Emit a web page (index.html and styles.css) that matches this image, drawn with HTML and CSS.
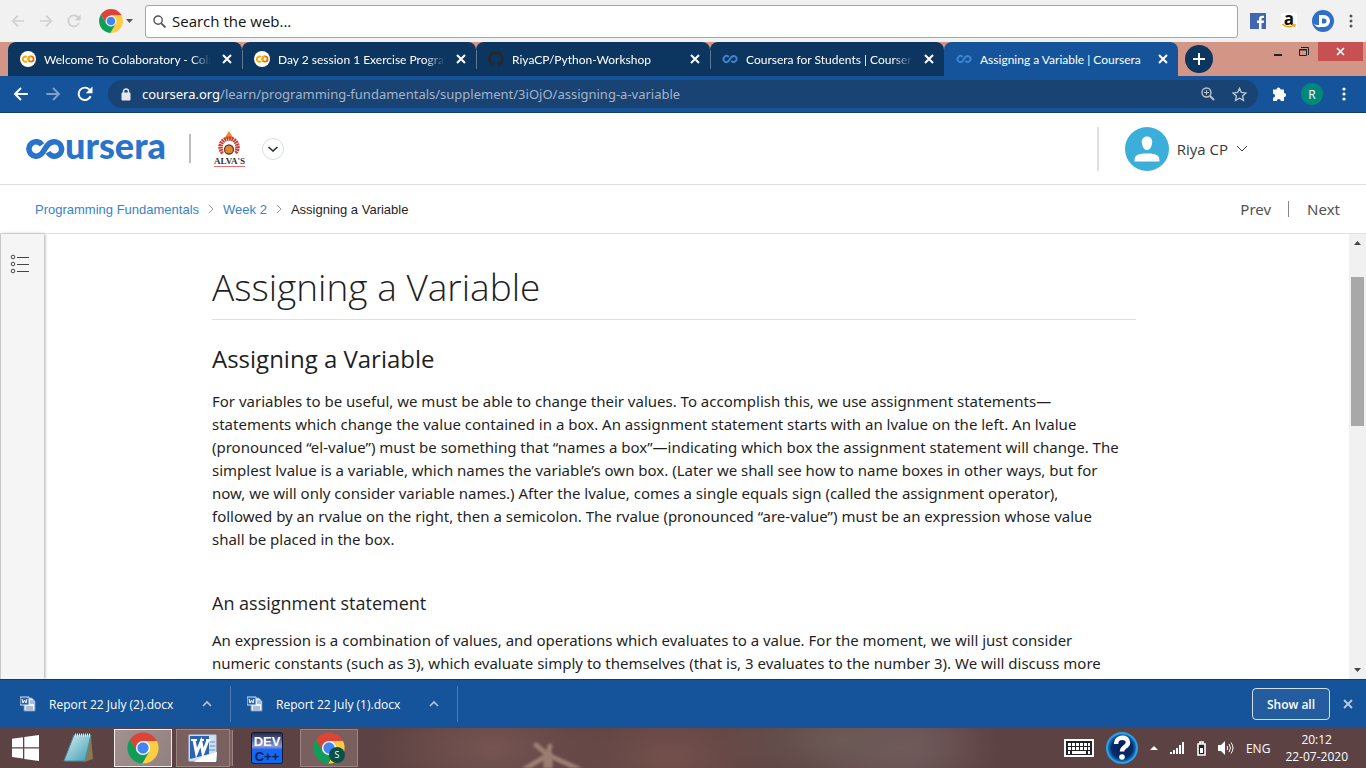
FILE: index.html
```html
<!DOCTYPE html>
<html lang="en">
<head>
<meta charset="utf-8">
<title>Assigning a Variable | Coursera</title>
<link rel="stylesheet" href="styles.css">
</head>
<body>
<svg class="defs" width="0" height="0" aria-hidden="true">
  <defs><clipPath id="disc"><circle cx="24" cy="24" r="22"/></clipPath>
  <linearGradient id="pad" x1="0" y1="0" x2="1" y2="1"><stop offset="0" stop-color="#d6f0f4"/><stop offset="1" stop-color="#3c9cb2"/></linearGradient>
  <linearGradient id="dev" x1="0" y1="0" x2="0" y2="1"><stop offset="0" stop-color="#20264a"/><stop offset=".45" stop-color="#8c98d8"/><stop offset=".55" stop-color="#1a66f0"/><stop offset="1" stop-color="#0a6af0"/></linearGradient>
  <radialGradient id="help"><stop offset="0" stop-color="#061e55"/><stop offset=".7" stop-color="#082a6c"/><stop offset="1" stop-color="#1690dc"/></radialGradient></defs>
  <symbol id="chrome" viewBox="0 0 48 48"><g clip-path="url(#disc)"><path fill="#db4437" d="M24 24 15.3 29 3.3 8.2 0 0h48v14H24z"/><path fill="#ffcd40" d="M24 24V14h24v34l-27.3 1.8L32.7 29z"/><path fill="#0f9d58" d="M24 24l8.7 5-12 20.8L0 48V5l3.3 3.2 12 20.8z"/></g><circle cx="24" cy="24" r="10" fill="#fff"/><circle cx="24" cy="24" r="8" fill="#4285f4"/></symbol>
  <symbol id="back" viewBox="0 0 24 24"><path d="M21 12H4M12 4l-8 8 8 8" fill="none" stroke="currentColor" stroke-width="2.6"/></symbol>
  <symbol id="forward" viewBox="0 0 24 24"><path d="M3 12h17M12 4l8 8-8 8" fill="none" stroke="currentColor" stroke-width="2.6"/></symbol>
  <symbol id="reload" viewBox="0 0 24 24"><path d="M19.5 15A8.3 8.3 0 1 1 18 6.2L20 8.4" fill="none" stroke="currentColor" stroke-width="2.6"/><path d="M22 2v9h-9z" fill="currentColor"/></symbol>
  <symbol id="close" viewBox="0 0 16 16"><path d="M4 4l8 8M12 4l-8 8" fill="none" stroke="currentColor" stroke-width="2"/></symbol>
  <symbol id="colab" viewBox="0 0 16 16"><circle cx="8" cy="8" r="8" fill="#fff"/><g fill="none" stroke-width="1.9"><path stroke="#f9ab00" d="M7 6A2.6 2.6 0 1 0 7 10.2"/><circle stroke="#e8710a" cx="11" cy="8" r="2.6"/><path stroke="#f9ab00" d="M9.3 10A2.6 2.6 0 0 1 11 5.4"/></g></symbol>
  <symbol id="github" viewBox="0 0 16 16"><path fill="#24292e" d="M8 0C3.6 0 0 3.6 0 8c0 3.5 2.3 6.500 5.500 7.600.4.1.5-.2.5-.4v-1.400c-2.200.5-2.700-1-2.700-1-.4-.9-.9-1.200-.9-1.200-.7-.5.1-.5.1-.5.8.1 1.200.8 1.200.8.7 1.200 1.900.9 2.300.7.1-.5.3-.9.5-1.100-1.800-.2-3.600-.9-3.600-4 0-.9.3-1.600.8-2.100-.1-.2-.4-1 .1-2.100 0 0 .7-.2 2.200.8a7.600 7.600 0 0 1 4 0c1.500-1 2.200-.8 2.200-.8.4 1.100.2 1.900.1 2.100.5.6.8 1.300.8 2.100 0 3.100-1.900 3.700-3.700 3.900.3.3.6.8.6 1.500v2.200c0 .2.1.5.6.4A8 8 0 0 0 8 0z"/></symbol>
  <symbol id="loop" viewBox="0 0 16 16"><path d="M6.700 6A3 3 0 1 0 6 10.600C8 9.500 8.200 5 11.600 5a3 3 0 1 1-2.200 5" fill="none" stroke="#3d85d0" stroke-width="1.900"/></symbol>
  <symbol id="up" viewBox="0 0 12 12"><path d="M2 8l4-4 4 4" fill="none" stroke="currentColor" stroke-width="1.600"/></symbol>
  <symbol id="down" viewBox="0 0 12 12"><path d="M1 3l5 5 5-5" fill="none" stroke="currentColor" stroke-width="1"/></symbol>
  <symbol id="right" viewBox="0 0 8 12"><path d="M2 2l4 4-4 4" fill="none" stroke="currentColor" stroke-width="1"/></symbol>
  <symbol id="doc" viewBox="0 0 16 16"><path d="M4 2h8l3 3v10H4z" fill="#eef4fb" stroke="#6f8cb5"/><path d="M10 5h4M10 7h4M6 11h7M6 13h7" stroke="#5d87c4"/><path d="M0 1h9v8H0z" fill="#2d5ca8" stroke="#d4e2f4"/><path d="M2 3l1 4 1.500-3L6 7l1-4" fill="none" stroke="#fff"/></symbol>
</svg>
<div class="screen">
  <div class="launcher">
    <button class="ghost" aria-label="Back"><svg class="i16"><use href="#back"/></svg></button>
    <button class="ghost" aria-label="Forward"><svg class="i16"><use href="#forward"/></svg></button>
    <button class="ghost" aria-label="Reload"><svg class="i16"><use href="#reload"/></svg></button>
    <button class="engine" aria-label="Choose browser"><svg class="i26"><use href="#chrome"/></svg><svg width="7" height="4"><path d="M0 0h7L3.500 4z" fill="#555"/></svg></button>
    <label class="search"><svg width="13" height="13" viewBox="0 0 14 14" fill="none" stroke="#555" aria-hidden="true"><circle cx="5.500" cy="5.500" r="4.500" stroke-width="1.500"/><path d="M9 9l4.500 4.500" stroke-width="2"/></svg><input type="text" aria-label="Search the web" placeholder="Search the web..."></label>
    <div class="tiles">
      <a href="#" aria-label="Facebook"><svg class="i16" viewBox="0 0 16 16"><path fill="#4267b2" d="M0 0h16v16H0z"/><path fill="#fff" d="M9 16v-6H7V7.500h2V6c0-2.300 1.300-3.300 3.200-3.300H14V5h-1.200C11.800 5 11.500 5.300 11.500 6.300v1.200H14l-.3 2.500h-2.200v6z"/></svg></a>
      <a class="amazon" href="#" aria-label="Amazon"><span>a</span><svg width="14" height="4" viewBox="0 0 14 4"><path d="M0 0q6 5 12 1M10 1h3l-1 2" fill="none" stroke="#f90" stroke-width="1.300"/></svg></a>
      <a href="#" aria-label="Dictionary"><svg width="22" height="22" viewBox="0 0 22 22"><circle cx="11" cy="11" r="11" fill="#2f6fca"/><path d="M2 13.500q2 2 4 1.500h1V5h5a6 6 0 0 1 0 12H8q-4 1-6-3.500z" fill="#fff"/><path d="M10 8.500h2a2.500 2.500 0 0 1 0 5h-2z" fill="#2f6fca"/></svg></a>
      <button class="dots" aria-label="Menu"><svg width="4" height="14"><g fill="currentColor"><circle cx="2" cy="2" r="1.500"/><circle cx="2" cy="7" r="1.500"/><circle cx="2" cy="12" r="1.500"/></g></svg></button>
    </div>
  </div>

  <div class="tabs">
    <div class="tab"><svg class="i16"><use href="#colab"/></svg><span class="title">Welcome To Colaboratory - Colab</span><button aria-label="Close tab"><svg class="i16"><use href="#close"/></svg></button></div>
    <div class="tab"><svg class="i16"><use href="#colab"/></svg><span class="title">Day 2 session 1 Exercise Programs</span><button aria-label="Close tab"><svg class="i16"><use href="#close"/></svg></button></div>
    <div class="tab"><svg class="i16"><use href="#github"/></svg><span class="title">RiyaCP/Python-Workshop</span><button aria-label="Close tab"><svg class="i16"><use href="#close"/></svg></button></div>
    <div class="tab"><svg class="i16"><use href="#loop"/></svg><span class="title">Coursera for Students | Coursera</span><button aria-label="Close tab"><svg class="i16"><use href="#close"/></svg></button></div>
    <div class="tab active"><svg class="i16"><use href="#loop"/></svg><span class="title">Assigning a Variable | Coursera</span><button aria-label="Close tab"><svg class="i16"><use href="#close"/></svg></button></div>
    <button class="newtab" aria-label="New tab"><svg width="12" height="12"><path d="M6 0v12M0 6h12" stroke="#fff" stroke-width="2"/></svg></button>
    <div class="window">
      <button aria-label="Minimize"><svg width="10" height="10"><path d="M1 8h8" stroke="#222" stroke-width="2"/></svg></button>
      <button aria-label="Restore"><svg width="10" height="10" fill="none" stroke="#222"><path d="M2 0.500h7.500V8"/><path d="M.5 2.500h7v6h-7z"/><path d="M0 3h8"/></svg></button>
      <button class="quit" aria-label="Close"><svg width="10" height="10"><path d="M1 1l7 7M8 1L1 8" stroke="#fff" stroke-width="1.600"/></svg></button>
    </div>
  </div>

  <div class="address">
    <button aria-label="Back"><svg class="i18"><use href="#back"/></svg></button>
    <button class="off" aria-label="Forward"><svg class="i18"><use href="#forward"/></svg></button>
    <button aria-label="Reload"><svg class="i18"><use href="#reload"/></svg></button>
    <div class="omnibox">
      <svg width="10" height="13" viewBox="0 0 10 13"><path d="M1 5h8v7H1z" fill="#e4e7ea" stroke="#e4e7ea"/><path d="M2.500 5V3.500a2.500 2.500 0 0 1 5 0V5" fill="none" stroke="#e4e7ea" stroke-width="1.500"/></svg>
      <span class="url"><b>coursera.org</b>/learn/programming-fundamentals/supplement/3iOjO/assigning-a-variable</span>
      <button aria-label="Zoom"><svg width="14" height="14" viewBox="0 0 14 14" fill="none" stroke="#b8c4d2"><circle cx="5.500" cy="5.500" r="4.500" stroke-width="1.400"/><path d="M9 9l4 4" stroke-width="2"/><path d="M3 5.500h5M5.500 3v5"/></svg></button>
      <button aria-label="Bookmark"><svg width="15" height="15" viewBox="0 0 16 16"><path d="M8 1.500l2 4.300 4.800.6-3.500 3.200.9 4.700L8 12l-4.200 2.300.9-4.700L1.200 6.400 6 5.800z" fill="none" stroke="#b8c4d2" stroke-width="1.500"/></svg></button>
    </div>
    <button class="ext" aria-label="Extensions"><svg width="16" height="16" viewBox="0 0 16 16"><path fill="#fff" d="M1 3.500h3.500a2 2 0 1 1 4 0H12V7a2 2 0 1 1 0 4.200V15H8.800a2 2 0 1 0-4 0H1v-3.200a2 2 0 1 0 0-4z"/></svg></button>
    <button class="profile" aria-label="Profile">R</button>
    <button class="dots" aria-label="Menu"><svg width="4" height="14"><g fill="#fff"><circle cx="2" cy="2" r="1.600"/><circle cx="2" cy="7" r="1.600"/><circle cx="2" cy="12" r="1.600"/></g></svg></button>
  </div>

  <header class="site">
    <a class="logo" href="#" aria-label="coursera"><svg width="39" height="20" viewBox="0 0 39 20"><path d="M16 5.800A7.200 7.200 0 1 0 15 15.300C19 12 20.500 2.800 28.500 2.800a7.200 7.200 0 1 1-6.500 10.500" fill="none" stroke="#2a73cc" stroke-width="5.600"/></svg><span>ursera</span></a>
    <span class="rule"></span>
    <a class="partner" href="#"><svg width="22" height="26" viewBox="0 0 22 26"><path d="M11 0l5 8H6z" fill="#f28a2d"/><path d="M5 22a8.500 8.500 0 1 1 12 0" fill="none" stroke="#c8403c" stroke-width="4.500" stroke-dasharray="1.900 .6"/><circle cx="11" cy="18.500" r="6" fill="#fff"/><circle cx="11" cy="18.500" r="4.500" fill="#e8862f" stroke="#59453c" stroke-width="1.300"/></svg><span>ALVA'S</span></a>
    <button class="switch" aria-label="Switch program"><svg width="12" height="12" viewBox="0 0 12 12"><path d="M1.500 4L6 8l4.500-4" fill="none" stroke="#1f2b3a" stroke-width="1.600"/></svg></button>
    <button class="account"><svg width="44" height="44" viewBox="0 0 44 44"><circle cx="22" cy="22" r="22" fill="#3bafda"/><path fill="#fff" d="M22 9.500c3.500 0 5.500 2.500 5.200 6-.3 4-2.400 7.500-5.200 7.500s-4.900-3.500-5.200-7.500c-.3-3.500 1.700-6 5.200-6zM9.500 34.500c0-6 2-8 12.500-8s12.500 2 12.500 8z"/></svg><span>Riya CP</span><svg class="i12"><use href="#down"/></svg></button>
  </header>

  <nav class="crumbs" aria-label="Breadcrumb">
    <a href="#">Programming Fundamentals</a><svg width="8" height="12"><use href="#right"/></svg><a href="#">Week 2</a><svg width="8" height="12"><use href="#right"/></svg><span>Assigning a Variable</span>
    <div class="pager"><a href="#">Prev</a><a href="#">Next</a></div>
  </nav>

  <div class="content">
    <aside><button aria-label="Course outline"><svg width="20" height="20" fill="none" stroke="#444"><circle cx="3" cy="3" r="1.800"/><circle cx="3" cy="10" r="1.800"/><circle cx="3" cy="17" r="1.800"/><path d="M7 3.500h12M7 10.500h12M7 17.500h12"/></svg></button></aside>
    <main><article>
      <h1>Assigning a Variable</h1>
      <h2>Assigning a Variable</h2>
      <p>For variables to be useful, we must be able to change their values. To accomplish this, we use assignment statements—<br>statements which change the value contained in a box. An assignment statement starts with an lvalue on the left. An lvalue<br>(pronounced “el-value”) must be something that “names a box”—indicating which box the assignment statement will change. The<br>simplest lvalue is a variable, which names the variable’s own box. (Later we shall see how to name boxes in other ways, but for<br>now, we will only consider variable names.) After the lvalue, comes a single equals sign (called the assignment operator),<br>followed by an rvalue on the right, then a semicolon. The rvalue (pronounced “are-value”) must be an expression whose value<br>shall be placed in the box.</p>
      <h3>An assignment statement</h3>
      <p>An expression is a combination of values, and operations which evaluates to a value. For the moment, we will just consider<br>numeric constants (such as 3), which evaluate simply to themselves (that is, 3 evaluates to the number 3). We will discuss more</p>
    </article></main>
    <div class="scroll" aria-hidden="true"><svg width="7" height="4"><path d="M0 4h7L3.500 0z" fill="#444"/></svg><div class="track"><div class="thumb"></div></div><svg width="7" height="4"><path d="M0 0h7L3.500 4z" fill="#444"/></svg></div>
  </div>

  <div class="downloads">
    <div class="file"><svg class="i16"><use href="#doc"/></svg><span>Report 22 July (2).docx</span><button aria-label="Options"><svg class="i12"><use href="#up"/></svg></button></div>
    <div class="file"><svg class="i16"><use href="#doc"/></svg><span>Report 22 July (1).docx</span><button aria-label="Options"><svg class="i12"><use href="#up"/></svg></button></div>
    <button class="showall">Show all</button>
    <button class="dismiss" aria-label="Close downloads"><svg class="i16"><use href="#close"/></svg></button>
  </div>

  <footer class="taskbar">
    <button class="start" aria-label="Start"><svg width="27" height="26" viewBox="0 0 27 26"><path fill="#fff" d="M0 3.700l11-1.500v10H0zM12.300 2L27 0v12.200H12.300zM0 13.500h11v10L0 22zM12.300 13.500H27V26l-14.700-2z"/></svg></button>
    <button class="app" aria-label="Notepad"><svg width="32" height="30" viewBox="0 0 32 30"><path d="M9 4l19-1 2 23-9 3z" fill="#8c7752"/><path d="M11 2h17l-6 26H1z" fill="url(#pad)" stroke="#4b8d9c"/><path d="M12 2h16" stroke="#e6e6e6" stroke-width="3" stroke-dasharray="1 1"/></svg></button>
    <button class="app open front" aria-label="Google Chrome"><svg width="34" height="34"><use href="#chrome"/></svg></button>
    <button class="app open stack" aria-label="Word"><svg width="30" height="29" viewBox="0 0 30 29"><path d="M1 1h27v26H1z" fill="#cfe0f4" stroke="#c0d3ea"/><path d="M2 2h19v18L2 25z" fill="#2b62b4"/><path d="M3 6h6M12 6h4M18 6h5" stroke="#fff" stroke-width="2"/><path d="M6 6l2.500 13L13 8l2 11 5-13" fill="none" stroke="#fff" stroke-width="3"/><path d="M22 8h5M22 12h5M21 16h6" stroke="#5f8dc8"/><path d="M6 28l8-5 15-5-1 10z" fill="#fff"/></svg></button>
    <button class="app" aria-label="Dev-C++"><svg width="32" height="32" viewBox="0 0 32 32"><rect x=".5" y=".5" width="31" height="31" rx="2" fill="url(#dev)" stroke="#0c1730"/><text x="16" y="14" class="dev1">DEV</text><text x="16" y="29" class="dev2">C++</text></svg></button>
    <button class="app open" aria-label="Chrome, profile S"><svg width="34" height="34"><use href="#chrome"/></svg><span class="badge">S</span></button>
    <svg class="wall" viewBox="0 0 100 40" width="100" height="40" fill="none" stroke="#a98a7c" stroke-linecap="round"><g stroke-width="5"><path d="M47 27 22 42M47 27 35 17M47 27l2-9M47 27l33 15"/><path d="M47 27v14" stroke-width="9"/></g></svg>
    <div class="tray">
      <svg width="30" height="18" viewBox="0 0 30 18"><path d="M1 1h28v16H1z" fill="#222" stroke="#fff" stroke-width="2"/><path d="M4 5.500h22M4 9.500h22" stroke="#fff" stroke-width="3" stroke-dasharray="3 1"/><path d="M4 13.500h2M8 13.500h14M24 13.500h2" stroke="#fff" stroke-width="3"/></svg>
      <svg width="32" height="32" viewBox="0 0 32 32"><circle cx="16" cy="16" r="15" fill="url(#help)" stroke="#2ba0e4" stroke-width="2"/><path d="M10 12c0-8 12-8 12-1.500 0 4.500-6 4-6 9" fill="none" stroke="#fff" stroke-width="4.500"/><circle cx="16" cy="25" r="2.800" fill="#fff"/></svg>
      <svg width="8" height="4"><path d="M0 4h8L4 0z" fill="#fff"/></svg>
      <svg width="15" height="12" fill="#fff"><path d="M0 10h2v2H0zM3 8h2v4H3zM6 6h2v6H6zM9 3h2v9H9zM12 0h2v12h-2z"/></svg>
      <svg width="9" height="15" viewBox="0 0 9 15"><path d="M1 3h7v11H1zM3 1h3v2H3z" fill="#222" stroke="#fff" stroke-width="1.600"/><path d="M3 7h3v5H3z" fill="#fff"/></svg>
      <svg width="16" height="14" viewBox="0 0 16 14"><path d="M0 4h3l4-4v14L3 10H0z" fill="#fff"/><path d="M9 5q1.500 2 0 4M11 3q3 4 0 8M13 1.500q4 5.500 0 11" fill="none" stroke="#fff"/></svg>
      <span class="lang">ENG</span>
      <div class="clock"><span>20:12</span><span>22-07-2020</span></div>
    </div>
  </footer>
</div>
</body>
</html>
```
FILE: styles.css
```css
* { box-sizing: border-box; }
body { margin: 0; font-family: "Open Sans", "Noto Sans", sans-serif; color: #1f1f1f; }
button { margin: 0; padding: 0; border: 0; background: none; font: inherit; color: inherit; display: flex; align-items: center; justify-content: center; }
a { text-decoration: none; color: inherit; }
svg { display: block; flex: none; }
.defs { position: absolute; }
.i12 { width: 12px; height: 12px; }
.i16 { width: 16px; height: 16px; }
.i18 { width: 18px; height: 18px; }
.i26 { width: 26px; height: 26px; }
.screen { display: flex; flex-direction: column; height: 100vh; overflow: hidden; background: #fff; }

.launcher { flex: none; height: 42px; display: flex; align-items: center; gap: 12px; padding: 0 13px 0 10px; background: #f1f1f1; }
.ghost { flex: none; width: 16px; color: #cfcfcf; }
.engine { gap: 2px; margin-left: 4px; }
.search { flex: 1; height: 33px; display: flex; align-items: center; gap: 6px; padding: 0 7px; background: #fff; border: 1px solid #a6a6a6; border-radius: 3px; }
.search input { flex: 1; min-width: 0; padding: 0; border: 0; outline: 0; background: none; font: 15px "Open Sans", sans-serif; }
.search input::placeholder { color: #111; opacity: 1; }
.tiles { display: flex; align-items: center; gap: 15px; color: #555; }
.amazon { width: 16px; height: 16px; display: flex; flex-direction: column; align-items: center; background: #fff; }
.amazon span { font: bold 17px/11px "Open Sans", sans-serif; color: #111; }

.tabs { flex: none; height: 34px; display: flex; padding-left: 8px; background: #d39585; }
.tab { position: relative; flex: 0 1 234px; min-width: 0; display: flex; align-items: center; gap: 8px; padding: 0 7px 0 12px; background: #0c3560; color: #fff; border-radius: 8px 8px 0 0; }
.tab + .tab::before { content: ""; position: absolute; left: 0; top: 8px; height: 19px; border-left: 1px solid #5b7898; }
.tab.active { background: #15539a; }
.tab.active::before { display: none; }
.title { flex: 1; min-width: 0; overflow: hidden; white-space: nowrap; font-family: Lato, sans-serif; font-size: 12px; mask-image: linear-gradient(to right, #000 88%, transparent); }
.active .title { mask-image: none; }
.newtab { flex: none; width: 28px; height: 28px; margin: 3px 0 0 7px; border-radius: 50%; background: #0c3560; }
.window { margin-left: auto; display: flex; align-items: flex-start; padding-right: 3px; }
.window button { width: 26px; height: 19px; }
.window .quit { width: 45px; margin-left: 1px; background: #c75050; }

.address { flex: none; height: 37px; display: flex; align-items: center; padding: 0 20px 0 12px; gap: 14px; background: #15539a; border-bottom: 1px solid #123c6e; color: #fff; }
.off { color: #7f9fc6; }
.omnibox { flex: 1; height: 28px; display: flex; align-items: center; gap: 17px; padding: 0 11px 0 13px; border-radius: 14px; background: #194373; }
.url { flex: 1; margin-left: -6px; font-family: "Noto Sans", sans-serif; font-size: 13px; color: #a5b4c7; }
.url b { font-weight: 400; color: #fff; }
.ext { margin-right: -1px; }
.profile { width: 22px; height: 22px; border-radius: 50%; background: #00897b; font-size: 12px; margin-right: 5px; }

.site { flex: none; height: 72px; display: flex; align-items: center; padding: 0 118px 0 26px; border-bottom: 1px solid #e1e1e1; }
.logo { display: flex; align-items: center; color: #2a73cc; }
.logo span { font: 900 36px/36px Lato, sans-serif; margin-top: -7px; }
.rule { width: 2px; height: 29px; margin: 0 23px; background: #bdbdbd; }
.partner { display: flex; flex-direction: column; align-items: center; color: #333; border-bottom: 1px solid #e57373; }
.partner span { font: bold 9px/9px "Liberation Serif", serif; }
.switch { width: 22px; height: 22px; margin-left: 17px; border: 1px solid #ddd; border-radius: 50%; }
.account { margin-left: auto; height: 44px; gap: 8px; padding-left: 26px; border-left: 2px solid #e1e1e1; font-size: 15px; color: #373a3c; }

.crumbs { flex: none; height: 49px; display: flex; align-items: center; gap: 8px; padding: 0 26px 0 35px; border-bottom: 1px solid #e1e1e1; font-family: "Liberation Sans", sans-serif; font-size: 13px; color: #1f1f1f; }
.crumbs > a { color: #3a82cb; }
.crumbs > svg { color: #999; }
.pager { margin-left: auto; display: flex; font: 15px/16px "Noto Sans", sans-serif; color: #525252; }
.pager a + a { margin-left: 17px; padding-left: 18px; border-left: 1px solid #888; }

.content { flex: 1; min-height: 0; display: flex; }
aside { flex: none; width: 44px; padding: 20px 0 0 9px; background: #f5f5f5; border-left: 1px solid #c8c8c8; box-shadow: 1px 0 3px #aaa; }
main { flex: 1; min-width: 0; overflow: hidden; padding-right: 45px; }
article { max-width: 924px; margin: 0 auto; }
h1, h2, h3, p { margin: 0; }
h1 { padding: 27px 0 6px; border-bottom: 1px solid #e1e1e1; font-size: 37px; line-height: 52px; font-weight: 300; }
h2 { margin-top: 21px; font-size: 24px; line-height: 36px; font-weight: 400; }
h3 { margin: 39px 0 13px; font-size: 18px; line-height: 26px; font-weight: 400; }
p { margin-top: 13px; font-family: "Noto Sans", sans-serif; font-size: 15px; line-height: 23px; }
.scroll { flex: none; width: 17px; display: flex; flex-direction: column; align-items: center; gap: 7px; padding: 7px 0; background: #f1f1f1; }
.track { flex: 1; width: 13px; padding-top: 25px; }
.thumb { height: 149px; background: #a8a8a8; }

.downloads { flex: none; height: 49px; display: flex; align-items: center; padding-right: 10px; background: #15539a; border-top: 1px solid #123c6e; color: #fff; font-size: 12px; }
.file { height: 36px; width: 227px; display: flex; align-items: center; gap: 13px; padding: 0 17px 0 16px; border-right: 1px solid #5079ac; }
.file:first-child { width: 231px; padding-left: 20px; }
.file button { margin-left: auto; color: #b6c6dc; }
.showall { width: 78px; height: 32px; margin-left: auto; border: 1px solid #d4dfec; border-radius: 4px; background: #245d9f; font-weight: 600; }
.dismiss { margin-left: 10px; color: #b6c6dc; }

.taskbar { flex: none; height: 40px; display: flex; align-items: center; padding-left: 10px; color: #fff;
  background: radial-gradient(130px 50px at 62% 30%, #6c5a56, transparent), radial-gradient(110px 60px at 49% 70%, #74504b, transparent), radial-gradient(120px 60px at 36% 50%, #765451, transparent), radial-gradient(100px 60px at 66% 50%, #735b5f, transparent), #5c4242; }
.start { width: 30px; margin-right: 10px; }
.app { position: relative; width: 58px; height: 38px; }
.open { border: 1px solid #9a8482; background: #79605f; margin-left: 4px; }
.front { border-color: #f0ebea; background: linear-gradient(120deg, #a3918f, #928180); }
.start + .app + .app { margin-left: 6px; }
.stack { width: 54px; box-shadow: 3px 0 0 -1px #79605f, 4px 0 0 -1px #9a8482; }
.stack + .app { width: 66px; margin-left: 4px; }
.stack + .app + .open { margin-left: 0; }
.badge { position: absolute; right: 12px; bottom: 3px; width: 16px; height: 16px; border-radius: 50%; background: #0b4f47; font-size: 9px; line-height: 16px; }
.dev1, .dev2 { font: bold 13px "Liberation Sans", sans-serif; text-anchor: middle; fill: #fff; }
.dev2 { fill: #0b1f55; }
.wall { margin-left: 143px; filter: blur(1px); opacity: .8; }
.tray { margin-left: auto; display: flex; align-items: center; gap: 12px; padding-right: 18px; font-size: 12px; }
.lang { margin-right: 3px; }
.clock { display: flex; flex-direction: column; align-items: center; line-height: 17px; }
```
